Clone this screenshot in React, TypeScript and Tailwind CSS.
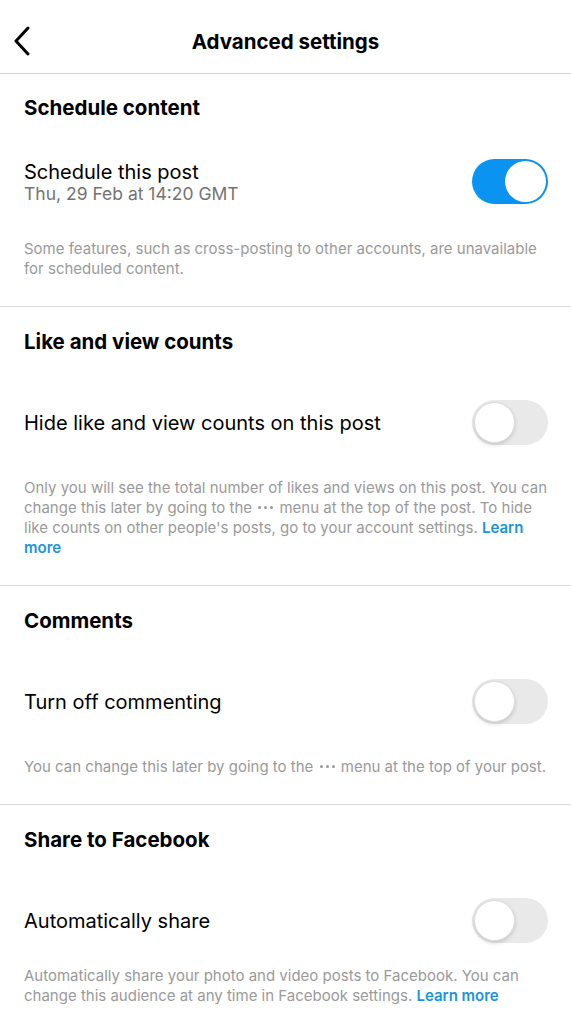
import React, { useState } from "react";

const Dots = () => (
  <span className="inline-flex items-center gap-[3px] align-middle mx-[2px] -mt-[2px]">
    <span className="w-[3px] h-[3px] rounded-full bg-[#9a9a9a]" />
    <span className="w-[3px] h-[3px] rounded-full bg-[#9a9a9a]" />
    <span className="w-[3px] h-[3px] rounded-full bg-[#9a9a9a]" />
  </span>
);

const Toggle = ({ on, onClick }: { on: boolean; onClick: () => void }) => (
  <button
    onClick={onClick}
    className={`relative shrink-0 w-[76px] h-[45px] rounded-full ${
      on ? "bg-[#0b93f2]" : "bg-[#e9e9ea]"
    }`}
  >
    <span
      className={`absolute top-[2px] w-[41px] h-[41px] rounded-full bg-white ${
        on
          ? "right-[2px]"
          : "left-[2px] border border-[#dcdcdc] shadow-[0_2px_4px_rgba(0,0,0,0.15)]"
      }`}
    />
  </button>
);

type SectionProps = {
  heading: string;
  title: string;
  subtitle?: string;
  on: boolean;
  onToggle: () => void;
  top: string;
  rowGap: string;
  noteGap: string;
  last?: boolean;
  children: React.ReactNode;
};

const Section = ({
  heading,
  title,
  subtitle,
  on,
  onToggle,
  top,
  rowGap,
  noteGap,
  last,
  children,
}: SectionProps) => (
  <section
    className={`pl-6 pr-[23px] ${top} ${last ? "pb-6" : "pb-[27px] border-b border-[#dbdbdb]"}`}
  >
    <h2 className="text-[20.5px] leading-[28px] font-bold text-black">{heading}</h2>
    <div className={`flex items-center justify-between ${rowGap}`}>
      <div className="flex flex-col">
        <span className="text-[20px] leading-[24px] text-black">{title}</span>
        {subtitle && (
          <span className="text-[17.5px] leading-[20px] text-[#737373]">{subtitle}</span>
        )}
      </div>
      <Toggle on={on} onClick={onToggle} />
    </div>
    <p className={`-mr-[9px] text-[15px] leading-[20px] text-[#9a9a9a] ${noteGap}`}>
      {children}
    </p>
  </section>
);

export default function App() {
  const [schedule, setSchedule] = useState(true);
  const [hideCounts, setHideCounts] = useState(false);
  const [comments, setComments] = useState(false);
  const [share, setShare] = useState(false);

  return (
    <div
      className="min-h-screen bg-white"
      style={{ fontFamily: "Inter, 'Liberation Sans', sans-serif" }}
    >
      {/* Header */}
      <header className="relative h-[74px] flex items-center justify-center border-b border-[#d4d4d4]">
        <button className="absolute left-[12px] top-[26px]">
          <svg width="20" height="30" viewBox="0 0 20 30" fill="none">
            <path
              d="M16 2 L4 15 L16 28"
              stroke="black"
              strokeWidth="3"
              strokeLinecap="round"
              strokeLinejoin="round"
            />
          </svg>
        </button>
        <h1 className="text-[20.5px] font-bold text-black mt-[12px]">Advanced settings</h1>
      </header>

      <Section
        heading="Schedule content"
        title="Schedule this post"
        subtitle="Thu, 29 Feb at 14:20 GMT"
        on={schedule}
        onToggle={() => setSchedule(!schedule)}
        top="pt-5"
        rowGap="mt-[37px]"
        noteGap="mt-[35px]"
      >
        Some features, such as cross-posting to other accounts, are unavailable for
        scheduled content.
      </Section>

      <Section
        heading="Like and view counts"
        title="Hide like and view counts on this post"
        on={hideCounts}
        onToggle={() => setHideCounts(!hideCounts)}
        top="pt-[21px]"
        rowGap="mt-[44px]"
        noteGap="mt-[33px]"
      >
        Only you will see the total number of likes and views on this post. You can
        change this later by going to the <Dots /> menu at the top of the post. To hide
        like counts on other people's posts, go to your account settings.{" "}
        <span className="font-semibold text-[#1a94e0]">Learn more</span>
      </Section>

      <Section
        heading="Comments"
        title="Turn off commenting"
        on={comments}
        onToggle={() => setComments(!comments)}
        top="pt-[21px]"
        rowGap="mt-[44px]"
        noteGap="mt-[33px]"
      >
        You can change this later by going to the <Dots /> menu at the top of your post.
      </Section>

      <Section
        heading="Share to Facebook"
        title="Automatically share"
        on={share}
        onToggle={() => setShare(!share)}
        top="pt-[21px]"
        rowGap="mt-[44px]"
        noteGap="mt-[23px]"
        last
      >
        Automatically share your photo and video posts to Facebook. You can change this
        audience at any time in Facebook settings.{" "}
        <span className="font-semibold text-[#1a94e0]">Learn more</span>
      </Section>
    </div>
  );
}
